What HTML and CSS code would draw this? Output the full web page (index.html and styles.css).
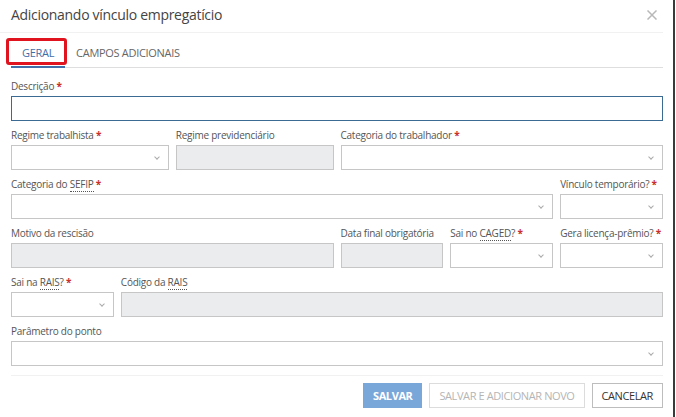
FILE: index.html
```html
<!DOCTYPE html>
<html lang="pt-BR">

<head>
    <meta charset="UTF-8">
    <meta name="viewport" content="width=device-width, initial-scale=1.0">
    <title>Adicionando vínculo empregatício</title>

    <link rel="stylesheet" href="styles.css">
</head>

<body>
    <div class="modal">
        <header class="modal-header">
            <h2>Adicionando vínculo empregatício</h2>
            <button class="close" type="button">
                <svg width="10" height="10" viewBox="0 0 10 10"><path d="M0.5 0.5L9.5 9.5M9.5 0.5L0.5 9.5" /></svg>
            </button>
        </header>

        <nav class="tabs">
            <a class="tab active" href="#">GERAL</a>
            <a class="tab" href="#">CAMPOS ADICIONAIS</a>
        </nav>

        <form class="form">
            <div class="field span-12">
                <label>Descrição <i>*</i></label>
                <div class="input focused"></div>
            </div>

            <div class="field span-3">
                <label>Regime trabalhista <i>*</i></label>
                <div class="input select"></div>
            </div>
            <div class="field span-3">
                <label>Regime previdenciário</label>
                <div class="input disabled"></div>
            </div>
            <div class="field span-6">
                <label>Categoria do trabalhador <i>*</i></label>
                <div class="input select"></div>
            </div>

            <div class="field span-10">
                <label>Categoria do <abbr>SEFIP</abbr> <i>*</i></label>
                <div class="input select"></div>
            </div>
            <div class="field span-2">
                <label>Vínculo temporário? <i>*</i></label>
                <div class="input select"></div>
            </div>

            <div class="field span-6">
                <label>Motivo da rescisão</label>
                <div class="input disabled"></div>
            </div>
            <div class="field span-2">
                <label>Data final obrigatória</label>
                <div class="input disabled"></div>
            </div>
            <div class="field span-2">
                <label>Sai no <abbr>CAGED</abbr>? <i>*</i></label>
                <div class="input select"></div>
            </div>
            <div class="field span-2">
                <label>Gera licença-prêmio? <i>*</i></label>
                <div class="input select"></div>
            </div>

            <div class="field span-2">
                <label>Sai na <abbr>RAIS</abbr>? <i>*</i></label>
                <div class="input select"></div>
            </div>
            <div class="field span-10">
                <label>Código da <abbr>RAIS</abbr></label>
                <div class="input disabled"></div>
            </div>

            <div class="field span-12">
                <label>Parâmetro do ponto</label>
                <div class="input select"></div>
            </div>
        </form>

        <footer class="modal-footer">
            <button class="btn primary" type="button">SALVAR</button>
            <button class="btn muted" type="button">SALVAR E ADICIONAR NOVO</button>
            <button class="btn" type="button">CANCELAR</button>
        </footer>

        <span class="highlight"></span>
    </div>
</body>

</html>
```

FILE: styles.css
```css
* {
    padding: 0;
    margin: 0;
    box-sizing: border-box;
    font-family: "Open Sans", "Noto Sans", sans-serif;
}

body {
    background-color: white;
    color: #555;
}

.modal {
    position: relative;
    width: 675px;
    height: 417px;
    border-right: 2px solid #3a3a3a;
    background-color: white;
}

.modal-header {
    height: 33px;
    display: flex;
    align-items: center;
    justify-content: space-between;
    padding: 0 6px 3px 11px;
    border-bottom: 1px solid #f1f1f1;
    margin-right: 10px;
}

.modal-header h2 {
    font-size: 14px;
    font-weight: normal;
    letter-spacing: -0.3px;
    color: #444;
    line-height: 20px;
}

.modal-header .close {
    border: none;
    background: none;
    display: flex;
    margin-top: 1px;
}

.modal-header .close svg path {
    stroke: #b8b8b8;
    stroke-width: 1.5;
}

.tabs {
    display: flex;
    height: 35px;
    margin: 0 10px 0 11px;
    border-bottom: 1px solid #dedede;
}

.tab {
    display: flex;
    align-items: center;
    padding: 5px 11px 0;
    font-size: 11px;
    letter-spacing: -0.3px;
    color: #666;
    text-decoration: none;
    border-bottom: 2px solid transparent;
    margin-bottom: -1px;
}

.tab.active {
    color: #3f6ea8;
    border-bottom-color: #3f6ea8;
}

.highlight {
    position: absolute;
    left: 6px;
    top: 38px;
    width: 61px;
    height: 27px;
    border: 3px solid #e0141e;
    border-radius: 3px;
}

.form {
    display: grid;
    grid-template-columns: repeat(12, 1fr);
    column-gap: 7px;
    row-gap: 8px;
    padding: 12px 10px 0 11px;
}

.span-2 {
    grid-column: span 2;
}

.span-3 {
    grid-column: span 3;
}

.span-6 {
    grid-column: span 6;
}

.span-10 {
    grid-column: span 10;
}

.span-12 {
    grid-column: span 12;
}

.field label {
    display: block;
    height: 13px;
    margin-bottom: 3px;
    font-size: 10px;
    letter-spacing: -0.25px;
    line-height: 13px;
    color: #555;
    white-space: nowrap;
}

.field label i {
    font-style: normal;
    color: #c9302c;
    font-weight: bold;
}

.field abbr {
    text-decoration: none;
    border-bottom: 1px dotted #555;
}

.input {
    height: 25px;
    border: 1px solid #c6c6c6;
    background-color: white;
    position: relative;
}

.input.focused {
    border-color: #3b6b92;
}

.input.disabled {
    background-color: #ebecee;
}

.input.select::after {
    content: "";
    position: absolute;
    right: 9px;
    top: 9px;
    width: 3px;
    height: 3px;
    border-right: 1px solid #aaa;
    border-bottom: 1px solid #aaa;
    transform: rotate(45deg);
}

.modal-footer {
    display: flex;
    justify-content: flex-end;
    gap: 7px;
    margin: 9px 10px 0 11px;
    padding-top: 7px;
    border-top: 1px solid #f1f1f1;
}

.btn {
    height: 25px;
    padding: 0 9px;
    font-size: 11px;
    letter-spacing: -0.4px;
    border: 1px solid #bdbdbd;
    background-color: white;
    color: #333;
}

.btn.primary {
    background-color: #7aa7da;
    border-color: #7aa7da;
    color: white;
    font-weight: bold;
}

.btn.muted {
    border-color: #dcdcdc;
    color: #b5b5b5;
}
```
